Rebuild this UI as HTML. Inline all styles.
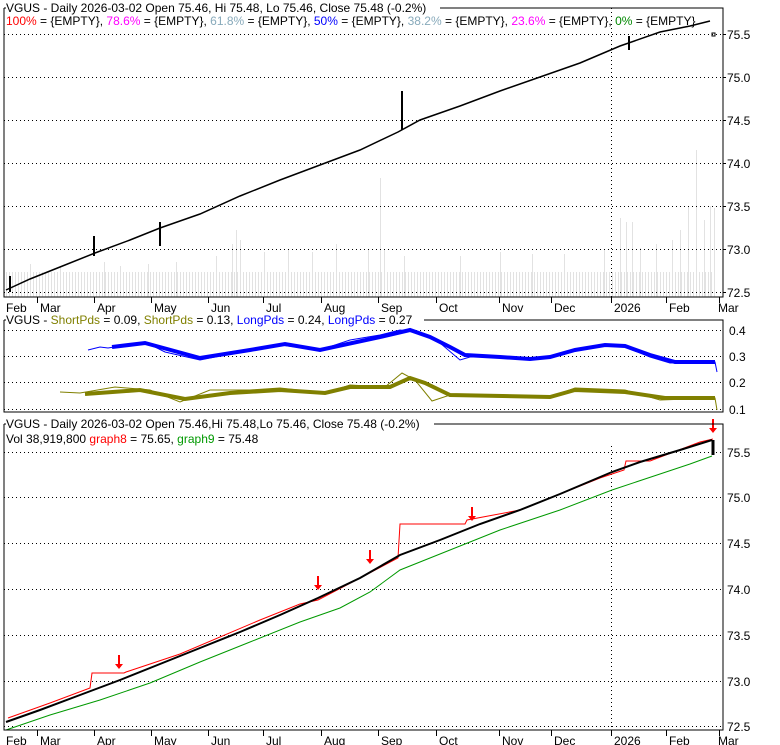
<!DOCTYPE html>
<html><head><meta charset="utf-8"><style>
html,body{margin:0;padding:0;background:#fff;}
svg{display:block;font-family:"Liberation Sans",sans-serif;}
text{font-size:12px;}
</style></head><body>
<svg width="780" height="745" viewBox="0 0 780 745" xmlns="http://www.w3.org/2000/svg">
<defs>
<pattern id="vb" x="0" y="0" width="3" height="10" patternUnits="userSpaceOnUse"><rect x="0" y="0" width="1" height="10" fill="#e2e2e2"/></pattern>
</defs>
<rect width="780" height="745" fill="#fff"/>
<!-- ===== Panel 1 ===== -->
<rect x="6" y="272" width="710" height="25" fill="url(#vb)"/>
<g stroke="#e2e2e2" stroke-width="1">
<path d="M104.5 297V262M216.5 297V256M232.5 297V244M236.5 297V230M240.5 297V240M264.5 297V252M288.5 297V250M312.5 297V252M336.5 297V244M368.5 297V250M380.5 297V178M384.5 297V250M404.5 297V256M460.5 297V256M500.5 297V252M532.5 297V254M564.5 297V254M604.5 297V250M620.5 297V218M626.5 297V222M632.5 297V222M640.5 297V248M656.5 297V244M672.5 297V240M680.5 297V230M688.5 297V206M696.5 297V150M704.5 297V220M710.5 297V206M714.5 297V208M148.5 297V264M176.5 297V262M120.5 297V266M60.5 297V266M30.5 297V264"/>
</g>
<g stroke="#000" stroke-dasharray="1,3" stroke-width="1">
<line x1="4" y1="34.5" x2="723" y2="34.5"/><line x1="4" y1="77.5" x2="723" y2="77.5"/>
<line x1="4" y1="120.5" x2="723" y2="120.5"/><line x1="4" y1="163.5" x2="723" y2="163.5"/>
<line x1="4" y1="206.5" x2="723" y2="206.5"/><line x1="4" y1="249.5" x2="723" y2="249.5"/>
<line x1="4" y1="292.5" x2="723" y2="292.5"/>
<line x1="611.5" y1="8" x2="611.5" y2="297"/>
</g>
<polyline fill="none" stroke="#000" stroke-width="1.5" points="6,290 30,279 60,267 95,253 130,240 160,228 200,214 240,196 280,180 320,165 360,150 398,132 420,120 460,106 500,91 540,77 580,63 620,46 660,32 690,26 710,21"/>
<g stroke="#000" stroke-width="2"><line x1="94" y1="236" x2="94" y2="256"/><line x1="402" y1="91" x2="402" y2="130"/><line x1="160" y1="222" x2="160" y2="246"/><line x1="629" y1="36" x2="629" y2="50"/><line x1="10" y1="276" x2="10" y2="292"/></g>
<rect x="712" y="33" width="3" height="3" fill="none" stroke="#000"/>
<path d="M4 8V297H723V8H440" fill="none" stroke="#000"/>
<line x1="4" y1="8" x2="6" y2="8" stroke="#000"/>
<text x="6" y="12">VGUS - Daily 2026-03-02 Open 75.46, Hi 75.48, Lo 75.46, Close 75.48 (-0.2%)</text>
<text x="6" y="25"><tspan fill="#f00">100%</tspan> = {EMPTY}, <tspan fill="#f0f">78.6%</tspan> = {EMPTY}, <tspan fill="#8ab">61.8%</tspan> = {EMPTY}, <tspan fill="#00f">50%</tspan> = {EMPTY}, <tspan fill="#8ab">38.2%</tspan> = {EMPTY}, <tspan fill="#f0f">23.6%</tspan> = {EMPTY}, <tspan fill="#080">0%</tspan> = {EMPTY}</text>
<g><text x="727" y="39">75.5</text><text x="727" y="82">75.0</text><text x="727" y="125">74.5</text><text x="727" y="168">74.0</text><text x="727" y="211">73.5</text><text x="727" y="254">73.0</text><text x="727" y="297">72.5</text></g>
<g stroke="#000"><path d="M723 34.5h3M723 77.5h3M723 120.5h3M723 163.5h3M723 206.5h3M723 249.5h3M723 292.5h3"/></g>
<g><g stroke="#000"><path d="M37.5 297v6M94.5 297v6M151.5 297v6M208.5 297v6M263.5 297v6M321.5 297v6M378.5 297v6M436.5 297v6M499.5 297v6M551.5 297v6M611.5 297v6M666.5 297v6M719.5 297v6"/></g>
<text x="6" y="312">Feb</text><text x="40" y="312">Mar</text><text x="97" y="312">Apr</text><text x="154" y="312">May</text><text x="211" y="312">Jun</text><text x="266" y="312">Jul</text><text x="324" y="312">Aug</text><text x="381" y="312">Sep</text><text x="439" y="312">Oct</text><text x="502" y="312">Nov</text><text x="554" y="312">Dec</text><text x="614" y="312">2026</text><text x="669" y="312">Feb</text><text x="718" y="312">Mar</text></g>
<!-- ===== Panel 2 ===== -->
<g stroke="#000" stroke-dasharray="1,3"><line x1="4" y1="330.5" x2="723" y2="330.5"/><line x1="4" y1="356.5" x2="723" y2="356.5"/><line x1="4" y1="382.5" x2="723" y2="382.5"/><line x1="4" y1="409.5" x2="723" y2="409.5"/></g>
<polyline fill="none" stroke="#00f" stroke-width="1" points="88,350 100,347 108,348 145,342 165,352 200,360 215,357 250,350 280,345 320,350 350,340 380,335 400,330 420,333 440,343 460,360 470,357 500,357 530,360 560,355 600,345 625,347 650,357 670,363 700,362 715,362 717,372"/>
<polyline fill="none" stroke="#00f" stroke-width="4" points="112,347 145,343 200,358 250,350 285,344 320,350 380,337 410,330 430,337 450,347 465,355 500,357 530,359 550,357 575,350 605,345 625,346 650,355 675,362 715,362"/>
<polyline fill="none" stroke="#808000" stroke-width="1" points="60,392 80,393 115,387 150,390 180,402 210,390 250,390 280,388 325,393 350,385 385,387 402,373 415,380 432,401 450,395 500,397 550,397 575,388 625,390 660,400 715,398 717,410"/>
<polyline fill="none" stroke="#808000" stroke-width="4" points="85,394 140,390 185,399 230,393 280,390 325,393 350,387 390,387 410,378 425,383 450,395 550,397 575,390 625,392 665,398 715,398"/>
<path d="M4 320V412H723V320H424" fill="none" stroke="#000"/>
<line x1="4" y1="320" x2="6" y2="320" stroke="#000"/>
<text x="6" y="324">VGUS - <tspan fill="#808000">ShortPds</tspan> = 0.09, <tspan fill="#808000">ShortPds</tspan> = 0.13, <tspan fill="#00f">LongPds</tspan> = 0.24, <tspan fill="#00f">LongPds</tspan> = 0.27</text>
<text x="729" y="335">0.4</text><text x="729" y="361">0.3</text><text x="729" y="387">0.2</text><text x="729" y="414">0.1</text>
<!-- ===== Panel 3 ===== -->
<g stroke="#000" stroke-dasharray="1,3"><line x1="4" y1="452.5" x2="723" y2="452.5"/><line x1="4" y1="497.5" x2="723" y2="497.5"/><line x1="4" y1="543.5" x2="723" y2="543.5"/><line x1="4" y1="589.5" x2="723" y2="589.5"/><line x1="4" y1="635.5" x2="723" y2="635.5"/><line x1="4" y1="681.5" x2="723" y2="681.5"/><line x1="4" y1="726.5" x2="723" y2="726.5"/><line x1="611.5" y1="446" x2="611.5" y2="730"/></g>
<polyline fill="none" stroke="#090" stroke-width="1" points="6,730 50,715 100,700 150,683 200,662 250,642 300,622 340,608 370,592 400,570 450,550 500,530 560,510 612,490 660,474 690,464 712,456"/>
<polyline fill="none" stroke="#f00" stroke-width="1" points="8,718 50,703 90,688 92,673 124,673 126,672 180,654 260,620 300,604 318,600 360,578 398,558 400,524 465,524 467,520 520,510 560,494 600,478 624,470 626,461 650,461 700,442 713,439"/>
<polyline fill="none" stroke="#000" stroke-width="2" points="6,722 40,710 80,695 120,680 160,664 200,648 240,632 280,615 318,598 360,578 400,555 440,540 480,524 520,510 560,494 612,472 640,462 680,450 712,440"/>
<line x1="713" y1="440" x2="713" y2="455" stroke="#000" stroke-width="3"/>
<g fill="#f00"><path d="M118 655h2v9h3l-4 5-4-5h3z"/><path d="M317 576h2v9h3l-4 5-4-5h3z"/><path d="M369 550h2v9h3l-4 5-4-5h3z"/><path d="M471 507h2v9h3l-4 5-4-5h3z"/><path d="M712 419h2v9h3l-4 5-4-5h3z"/></g>
<path d="M4 424V730H723V424H434" fill="none" stroke="#000"/>
<line x1="4" y1="424" x2="6" y2="424" stroke="#000"/>
<text x="6" y="428">VGUS - Daily 2026-03-02 Open 75.46,Hi 75.48,Lo 75.46, Close 75.48 (-0.2%)</text>
<text x="6" y="443">Vol 38,919,800 <tspan fill="#f00">graph8</tspan> = 75.65, <tspan fill="#090">graph9</tspan> = 75.48</text>
<text x="727" y="457">75.5</text><text x="727" y="502">75.0</text><text x="727" y="548">74.5</text><text x="727" y="594">74.0</text><text x="727" y="640">73.5</text><text x="727" y="686">73.0</text><text x="727" y="731">72.5</text>
<g transform="translate(0,433)"><g stroke="#000"><path d="M37.5 297v6M94.5 297v6M151.5 297v6M208.5 297v6M263.5 297v6M321.5 297v6M378.5 297v6M436.5 297v6M499.5 297v6M551.5 297v6M611.5 297v6M666.5 297v6M719.5 297v6"/></g>
<text x="6" y="312">Feb</text><text x="40" y="312">Mar</text><text x="97" y="312">Apr</text><text x="154" y="312">May</text><text x="211" y="312">Jun</text><text x="266" y="312">Jul</text><text x="324" y="312">Aug</text><text x="381" y="312">Sep</text><text x="439" y="312">Oct</text><text x="502" y="312">Nov</text><text x="554" y="312">Dec</text><text x="614" y="312">2026</text><text x="669" y="312">Feb</text><text x="718" y="312">Mar</text></g>
</svg>
</body></html>
